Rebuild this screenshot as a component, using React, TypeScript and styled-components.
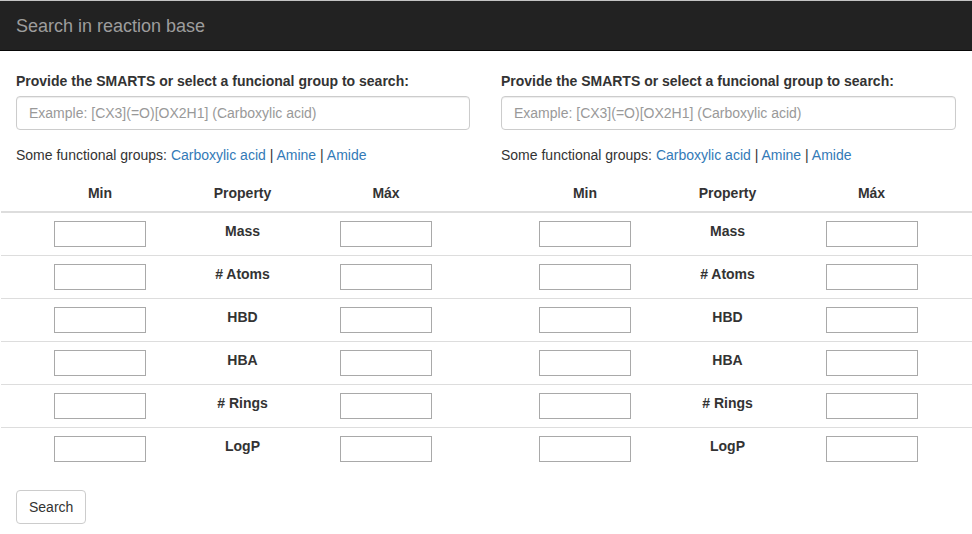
import React from "react";
import styled, { createGlobalStyle } from "styled-components";

const GlobalStyle = createGlobalStyle`
  html, body {
    margin: 0;
    padding: 0;
    background: #fff;
  }
  body {
    font-family: "Liberation Sans", Arial, Helvetica, sans-serif;
    font-size: 14px;
    line-height: 20px;
    color: #333;
  }
  * { box-sizing: border-box; }
`;

const Navbar = styled.header`
  height: 51px;
  background: #222;
  border-top: 1px solid #c4c4c4;
  border-bottom: 1px solid #080808;
`;

const Brand = styled.div`
  padding: 15px 16px;
  font-size: 18px;
  line-height: 20px;
  color: #9d9d9d;
`;

const Page = styled.main`
  padding-left: 1px;
`;

const Columns = styled.div`
  display: grid;
  grid-template-columns: 485px 1fr;
  margin-top: 20px;
`;

const Column = styled.section`
  display: flex;
  flex-direction: column;
`;

const FormArea = styled.div`
  padding: 0 16px 0 15px;
`;

const Label = styled.label`
  display: block;
  font-weight: bold;
  margin-bottom: 5px;
`;

const SmartsInput = styled.input`
  display: block;
  width: 100%;
  height: 34px;
  padding: 6px 12px;
  font-family: inherit;
  font-size: 14px;
  color: #555;
  background: #fff;
  border: 1px solid #ccc;
  border-radius: 4px;
  box-shadow: inset 0 1px 1px rgba(0, 0, 0, 0.075);
  margin-bottom: 15px;
  outline: none;
  &::placeholder {
    color: #999;
  }
`;

const Groups = styled.p`
  margin: 0 0 10px;
`;

const Link = styled.a`
  color: #337ab7;
  text-decoration: none;
  cursor: pointer;
`;

const Table = styled.div`
  display: grid;
  grid-template-columns: 198px 87px 1fr;
`;

const HeadCell = styled.div`
  padding: 8px;
  font-weight: bold;
  text-align: center;
  border-bottom: 2px solid #ddd;
`;

const Cell = styled.div<{ $first: boolean }>`
  padding: 8px;
  text-align: center;
  font-weight: bold;
  border-top: ${(p) => (p.$first ? "0" : "1px solid #ddd")};
  display: flex;
  justify-content: center;
  align-items: flex-start;
`;

const RangeInput = styled.input`
  width: 92px;
  height: 26px;
  padding: 1px 2px;
  border: 1px solid #a9a9a9;
  background: #fff;
  font-family: inherit;
  font-size: 13px;
  outline: none;
`;

const Footer = styled.div`
  padding: 20px 15px 0;
`;

const Button = styled.button`
  height: 34px;
  padding: 6px 12px;
  font-family: inherit;
  font-size: 14px;
  line-height: 20px;
  color: #333;
  background: #fff;
  border: 1px solid #ccc;
  border-radius: 4px;
  cursor: pointer;
`;

const properties = ["Mass", "# Atoms", "HBD", "HBA", "# Rings", "LogP"];

const SearchColumn: React.FC = () => (
  <Column>
    <FormArea>
      <Label>Provide the SMARTS or select a funcional group to search:</Label>
      <SmartsInput placeholder="Example: [CX3](=O)[OX2H1] (Carboxylic acid)" />
      <Groups>
        Some functional groups: <Link>Carboxylic acid</Link> | <Link>Amine</Link> |{" "}
        <Link>Amide</Link>
      </Groups>
    </FormArea>
    <Table>
      <HeadCell>Min</HeadCell>
      <HeadCell>Property</HeadCell>
      <HeadCell>Máx</HeadCell>
      {properties.map((prop, i) => (
        <React.Fragment key={prop}>
          <Cell $first={i === 0}>
            <RangeInput />
          </Cell>
          <Cell $first={i === 0}>{prop}</Cell>
          <Cell $first={i === 0}>
            <RangeInput />
          </Cell>
        </React.Fragment>
      ))}
    </Table>
  </Column>
);

export default function App() {
  return (
    <>
      <GlobalStyle />
      <Navbar>
        <Brand>Search in reaction base</Brand>
      </Navbar>
      <Page>
        <Columns>
          <SearchColumn />
          <SearchColumn />
        </Columns>
        <Footer>
          <Button>Search</Button>
        </Footer>
      </Page>
    </>
  );
}
